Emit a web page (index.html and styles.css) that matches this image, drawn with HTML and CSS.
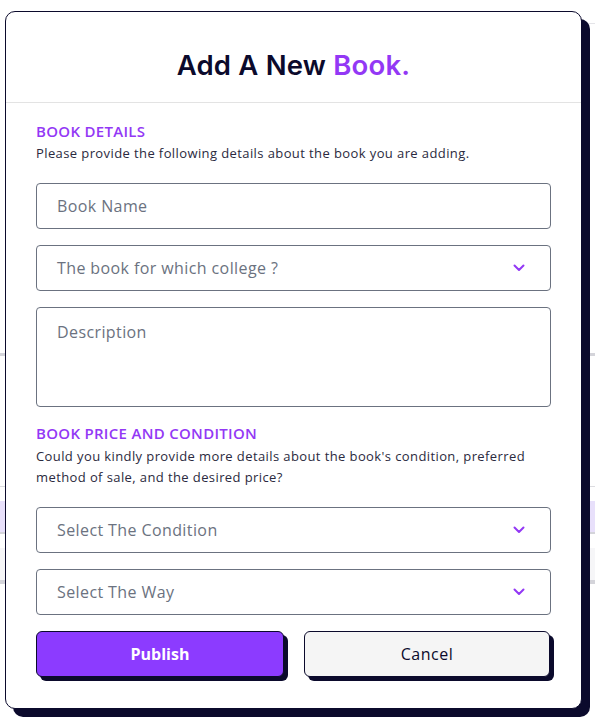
FILE: index.html
```html
<!DOCTYPE html>
<html lang="en">
<head>
<meta charset="utf-8">
<title>Add A New Book</title>
<link rel="stylesheet" href="styles.css">
</head>
<body>
<div class="page">
  <div class="bg-line bg-top"></div>
  <div class="bg-rule r1"></div>
  <div class="bg-thin r2"></div>
  <div class="bg-band"></div>
  <div class="bg-rule r3"></div>
  <div class="bg-light"></div>
  <div class="bg-rule r4"></div>
</div>

<div class="modal">
  <div class="modal-head">
    <h1 class="title">Add A New <span class="accent">Book.</span></h1>
  </div>
  <div class="modal-body">
    <h2 class="section">BOOK DETAILS</h2>
    <p class="hint">Please provide the following details about the book you are adding.</p>

    <div class="field"><span class="ph">Book Name</span></div>
    <div class="field select"><span class="ph">The book for which college ?</span>
      <svg class="chev" width="12" height="8" viewBox="0 0 12 8"><path d="M1.5 1.5 6 6 10.5 1.5" fill="none" stroke="#9338f5" stroke-width="2" stroke-linecap="round" stroke-linejoin="round"/></svg>
    </div>
    <div class="field area"><span class="ph">Description</span></div>

    <h2 class="section sec2">BOOK PRICE AND CONDITION</h2>
    <p class="hint hint2">Could you kindly provide more details about the book's condition, preferred method of sale, and the desired price?</p>

    <div class="field select"><span class="ph">Select The Condition</span>
      <svg class="chev" width="12" height="8" viewBox="0 0 12 8"><path d="M1.5 1.5 6 6 10.5 1.5" fill="none" stroke="#9338f5" stroke-width="2" stroke-linecap="round" stroke-linejoin="round"/></svg>
    </div>
    <div class="field select"><span class="ph">Select The Way</span>
      <svg class="chev" width="12" height="8" viewBox="0 0 12 8"><path d="M1.5 1.5 6 6 10.5 1.5" fill="none" stroke="#9338f5" stroke-width="2" stroke-linecap="round" stroke-linejoin="round"/></svg>
    </div>

    <div class="actions">
      <button class="btn primary">Publish</button>
      <button class="btn secondary">Cancel</button>
    </div>
  </div>
</div>
</body>
</html>
```

FILE: styles.css
```css
* { box-sizing: border-box; }
html, body { margin: 0; padding: 0; background: #fff; }
body {
  width: 595px;
  height: 721px;
  overflow: hidden;
  position: relative;
  font-family: "Open Sans", "Noto Sans", sans-serif;
  color: #0b0a2c;
}

/* faint page behind the modal */
.page { display: flex; flex-direction: column; padding-top: 23px; }
.bg-line { height: 1px; background: #e4e4e8; margin-left: 560px; }
.bg-rule { height: 3px; background: #d4d4da; }
.r1 { margin-top: 329px; }
.bg-thin { height: 1px; background: #dcdce0; margin-top: 130px; }
.bg-band { height: 31px; background: #e8e0fb; margin-top: 14px; }
.r3 { margin-top: 0; height: 2px; }
.bg-light { height: 32px; background: #f6f6f8; margin-top: 14px; }
.r4 { margin-top: 0; height: 4px; }

/* modal */
.modal {
  position: absolute;
  left: 5px;
  top: 11px;
  width: 577px;
  height: 698px;
  background: #fff;
  border: 1px solid #0b0a2c;
  border-radius: 10px;
  box-shadow: 8px 8px 0 0 #0b0a2c;
  display: flex;
  flex-direction: column;
}
.modal-head {
  height: 91px;
  border-bottom: 1px solid #e3e3e3;
  display: flex;
  align-items: center;
  justify-content: center;
}
.title {
  margin: 0;
  padding-top: 15px;
  font-family: "Inter", sans-serif;
  font-weight: 600;
  font-size: 27.5px;
  letter-spacing: 0.2px;
  color: #0b0a2c;
}
.accent { color: #9338f5; }

.modal-body {
  padding: 18px 30px 0 30px;
  display: flex;
  flex-direction: column;
}
.section {
  margin: 0;
  font-size: 15px;
  font-weight: 600;
  line-height: 20px;
  letter-spacing: 0.3px;
  color: #9338f5;
}
.sec2 { margin-top: 16px; }
.hint {
  margin: 2px 0 0 0;
  font-size: 13px;
  letter-spacing: 0.4px;
  line-height: 21px;
  color: #2b2a40;
}
.hint2 { margin-top: 3px; }

.field {
  height: 46px;
  border: 1px solid #6b7280;
  border-radius: 4px;
  margin-top: 16px;
  display: flex;
  align-items: center;
  padding: 0 20px;
}
.modal-body .hint + .field { margin-top: 19px; }
.ph {
  font-size: 16px;
  letter-spacing: 0.4px;
  color: #6b7280;
}
.select { justify-content: space-between; padding-right: 25px; }
.chev { display: block; }
.area {
  height: 100px;
  align-items: flex-start;
  padding-top: 13px;
}

.actions {
  margin-top: 16px;
  display: flex;
  gap: 20px;
}
.btn {
  height: 46px;
  border: 1px solid #0b0a2c;
  border-radius: 6px;
  box-shadow: 4px 4px 0 0 #0b0a2c;
  font-family: "Open Sans", sans-serif;
  font-size: 16px;
  cursor: pointer;
}
.primary {
  width: 248px;
  background: #8c3bff;
  color: #fff;
  font-weight: 700;
}
.secondary {
  width: 246px;
  background: #f5f5f5;
  color: #0b0a2c;
  font-weight: 500;
  letter-spacing: 0.5px;
}
```
